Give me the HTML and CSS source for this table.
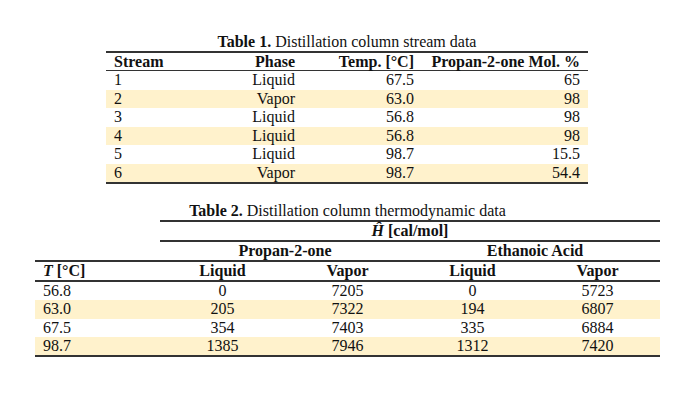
FILE: index.html
```html
<!DOCTYPE html>
<html lang="en">
<head>
<meta charset="utf-8">
<title>Distillation column data</title>
<link rel="stylesheet" href="styles.css">
</head>
<body>
<div class="page">
  <table class="t1">
    <caption><b>Table 1.</b> Distillation column stream data</caption>
    <colgroup>
      <col class="c1a"><col class="c1b"><col class="c1c"><col class="c1d">
    </colgroup>
    <thead>
      <tr><th class="l">Stream</th><th class="r">Phase</th><th class="r">Temp. [°C]</th><th class="r">Propan-2-one Mol. %</th></tr>
    </thead>
    <tbody>
      <tr><td class="l">1</td><td class="r">Liquid</td><td class="r">67.5</td><td class="r">65</td></tr>
      <tr class="hl"><td class="l">2</td><td class="r">Vapor</td><td class="r">63.0</td><td class="r">98</td></tr>
      <tr><td class="l">3</td><td class="r">Liquid</td><td class="r">56.8</td><td class="r">98</td></tr>
      <tr class="hl"><td class="l">4</td><td class="r">Liquid</td><td class="r">56.8</td><td class="r">98</td></tr>
      <tr><td class="l">5</td><td class="r">Liquid</td><td class="r">98.7</td><td class="r">15.5</td></tr>
      <tr class="hl last"><td class="l">6</td><td class="r">Vapor</td><td class="r">98.7</td><td class="r">54.4</td></tr>
    </tbody>
  </table>

  <table class="t2">
    <caption><b>Table 2.</b> Distillation column thermodynamic data</caption>
    <colgroup>
      <col class="c2"><col class="c2"><col class="c2"><col class="c2"><col class="c2">
    </colgroup>
    <thead>
      <tr class="h1"><th class="blank"></th><th class="unit" colspan="4"><i>Ĥ</i> [cal/mol]</th></tr>
      <tr class="h2"><th class="sp"></th><th colspan="2">Propan-2-one</th><th colspan="2">Ethanoic Acid</th></tr>
      <tr class="h3"><th class="l"><i>T</i> [°C]</th><th>Liquid</th><th>Vapor</th><th>Liquid</th><th>Vapor</th></tr>
    </thead>
    <tbody>
      <tr><td class="l">56.8</td><td>0</td><td>7205</td><td>0</td><td>5723</td></tr>
      <tr class="hl"><td class="l">63.0</td><td>205</td><td>7322</td><td>194</td><td>6807</td></tr>
      <tr><td class="l">67.5</td><td>354</td><td>7403</td><td>335</td><td>6884</td></tr>
      <tr class="hl last"><td class="l">98.7</td><td>1385</td><td>7946</td><td>1312</td><td>7420</td></tr>
    </tbody>
  </table>
</div>
</body>
</html>
```
FILE: styles.css
```css
html, body {
  margin: 0;
  padding: 0;
  background: #ffffff;
}

body {
  font-family: "Liberation Serif", "Times New Roman", serif;
  font-size: 16px;
  color: #111111;
}

.page {
  padding-top: 33px;
}

table {
  border-collapse: collapse;
  table-layout: fixed;
}

caption {
  line-height: 18px;
  height: 18px;
  text-align: center;
  white-space: nowrap;
}

th, td {
  padding: 0 8px;
  white-space: nowrap;
  line-height: 18px;
}

th {
  font-weight: bold;
}

.l { text-align: left; }
.r { text-align: right; }

.hl td {
  background: #fff2cc;
}

/* Table 1 */
.t1 {
  margin-left: 106px;
  width: 482px;
}

.c1a { width: 94px; }
.c1b { width: 103px; }
.c1c { width: 119px; }
.c1d { width: 166px; }

.t1 thead th {
  border-top: 2px solid #333333;
  border-bottom: 1px solid #333333;
  height: 17px;
  line-height: 17px;
}

.t1 tbody td {
  height: 18.5px;
  line-height: 18.5px;
}

.t1 .last td {
  border-bottom: 2px solid #333333;
}

/* Table 2 */
.t2 {
  margin-top: 18px;
  margin-left: 35px;
  width: 625px;
}

.c2 { width: 125px; }

.t2 th, .t2 td {
  text-align: center;
}

.t2 .l {
  text-align: left;
}

.t2 .h1 th {
  height: 18px;
}

.t2 .h1 .unit {
  border-top: 2px solid #333333;
  border-bottom: 2px solid #333333;
}

.t2 .h2 th {
  height: 18px;
  border-bottom: 2px solid #333333;
}

.t2 .h3 th {
  height: 18px;
  border-bottom: 2px solid #333333;
}

.t2 tbody td {
  height: 18.25px;
  line-height: 18.25px;
}

.t2 .last td {
  border-bottom: 2px solid #333333;
}
```
